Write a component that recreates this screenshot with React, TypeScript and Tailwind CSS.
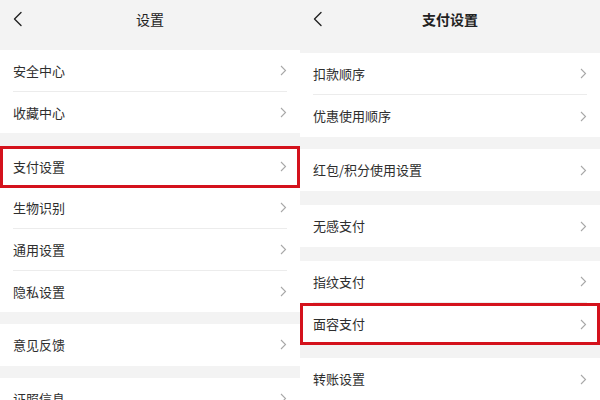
type Row = { label: string; marked?: boolean }
type Group = { mt: string; rows: Row[] }

const leftGroups: Group[] = [
  { mt: 'mt-[12px]', rows: [{ label: '安全中心' }, { label: '收藏中心' }] },
  {
    mt: 'mt-[13px]',
    rows: [{ label: '支付设置', marked: true }, { label: '生物识别' }, { label: '通用设置' }, { label: '隐私设置' }],
  },
  { mt: 'mt-[12px]', rows: [{ label: '意见反馈' }] },
  { mt: 'mt-[12px]', rows: [{ label: '证照信息' }] },
]

const rightGroups: Group[] = [
  { mt: 'mt-[15px]', rows: [{ label: '扣款顺序' }, { label: '优惠使用顺序' }] },
  { mt: 'mt-[12px]', rows: [{ label: '红包/积分使用设置' }] },
  { mt: 'mt-[14px]', rows: [{ label: '无感支付' }] },
  { mt: 'mt-[14px]', rows: [{ label: '指纹支付' }, { label: '面容支付', marked: true }] },
  { mt: 'mt-[13px]', rows: [{ label: '转账设置' }] },
]

const font = { fontFamily: '"Noto Sans CJK SC", "Noto Sans", sans-serif' }

function Back() {
  return (
    <svg width="16" height="20" viewBox="0 0 16 20" className="absolute left-[10px] top-[9px]">
      <path d="M11 3.5 L4.5 10 L11 16.5" fill="none" stroke="#222" strokeWidth="1.4" strokeLinecap="round" strokeLinejoin="round" />
    </svg>
  )
}

function Chevron() {
  return (
    <svg width="7" height="11" viewBox="0 0 7 11">
      <path d="M1 1 L5.5 5.5 L1 10" fill="none" stroke="#a8a8a8" strokeWidth="1.1" />
    </svg>
  )
}

function Item({ row, last, h }: { row: Row; last: boolean; h: string }) {
  return (
    <div className="relative bg-white">
      <div className={`mx-[13px] ${h} flex items-center justify-between ${last ? '' : 'border-b border-[#ececec]'}`}>
        <span className="text-[13px] text-[#2e2e2e]">{row.label}</span>
        <Chevron />
      </div>
      {row.marked && <div className="absolute inset-0 border-[3px] border-[#d4121c]" />}
    </div>
  )
}

function Panel({ title, bold, groups, h }: { title: string; bold?: boolean; groups: Group[]; h: string }) {
  return (
    <div className="w-[300px] flex flex-col bg-[#f3f3f3]">
      <div className="relative h-[38px] shrink-0 flex items-center justify-center">
        <Back />
        <span className={`text-[14px] text-[#222] ${bold ? 'font-bold' : ''}`}>{title}</span>
      </div>
      {groups.map((g, i) => (
        <div key={i} className={`flex flex-col shrink-0 ${g.mt}`}>
          {g.rows.map((r, j) => (
            <Item key={r.label} row={r} h={h} last={j === g.rows.length - 1} />
          ))}
        </div>
      ))}
    </div>
  )
}

export default function App() {
  return (
    <div className="w-[600px] h-[400px] overflow-hidden flex items-start bg-[#f3f3f3]" style={font}>
      <Panel title="设置" groups={leftGroups} h="h-[41.5px]" />
      <Panel title="支付设置" bold groups={rightGroups} h="h-[42px]" />
    </div>
  )
}
